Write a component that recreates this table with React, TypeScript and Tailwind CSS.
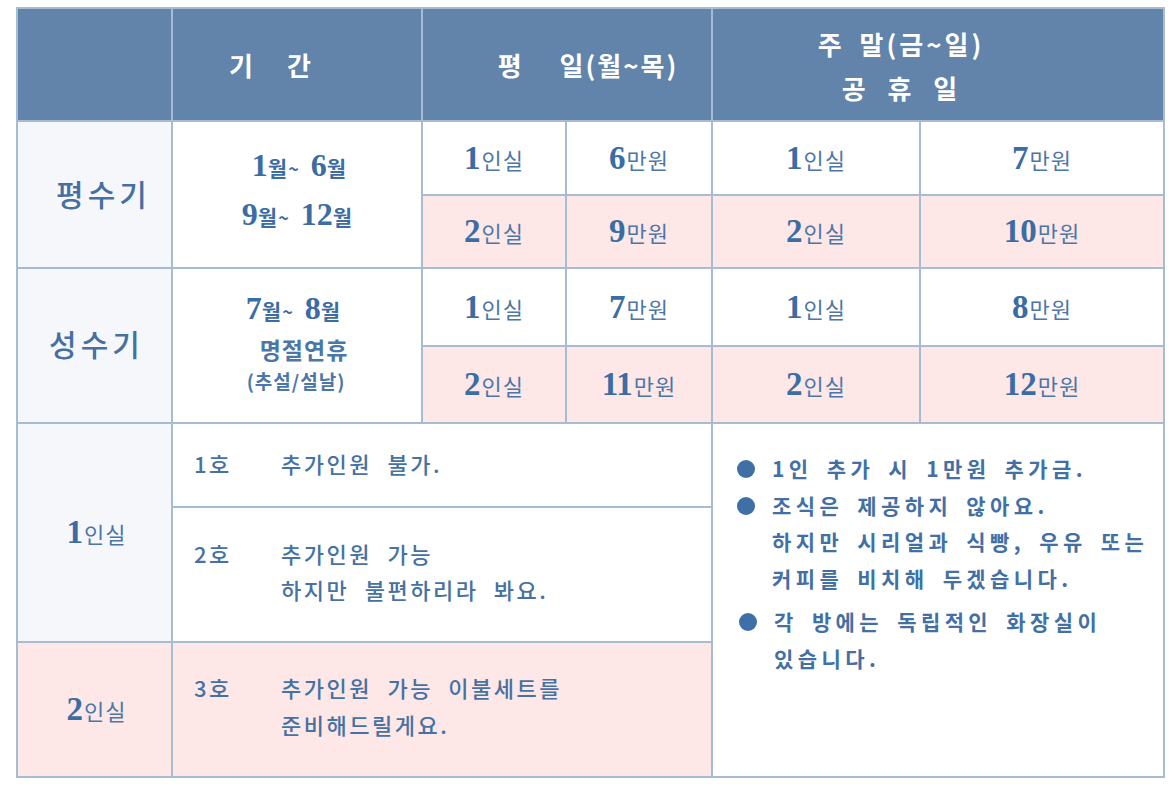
const KR = "font-['Noto_Sans_CJK_KR','Noto_Sans',sans-serif]";
const NUM = "font-['Liberation_Serif','DejaVu_Serif',serif] font-bold";
const cell = 'border-2 border-[#a6bcd3] text-center align-middle';

function Price({ n, unit }: { n: string; unit: string }) {
  return (
    <span className="inline-flex items-baseline">
      <span className={`${NUM} text-[33px] leading-none text-[#3b6ca3]`}>{n}</span>
      <span className={`${KR} text-[22px] leading-none text-[#4b76a8] ml-[1px] tracking-[1px]`}>{unit}</span>
    </span>
  );
}

function Month({ n }: { n: string }) {
  return (
    <>
      <span className={`${NUM} text-[32px]`}>{n}</span>
      <span className={`${KR} text-[21px] font-bold`}>월</span>
    </>
  );
}

function Tilde() {
  return <span className={`${KR} text-[18px] font-bold pl-[1px] pr-[12px]`}>~</span>;
}

function PriceRow({ pink, cells }: { pink: boolean; cells: [string, string][] }) {
  return (
    <>
      {cells.map(([n, unit], i) => (
        <td key={i} className={`${cell} ${pink ? 'bg-[#fde7e7]' : 'bg-white'}`}>
          <Price n={n} unit={unit} />
        </td>
      ))}
    </>
  );
}

const notes = [
  ['1인 추가 시 1만원 추가금.'],
  ['조식은 제공하지 않아요.', '하지만 시리얼과 식빵, 우유 또는', '커피를 비치해 두겠습니다.'],
  ['각 방에는 독립적인 화장실이', '있습니다.'],
];

const roomText = `${KR} text-[22px] font-medium text-[#4671a3] tracking-[2.5px] [word-spacing:8px]`;

export default function App() {
  return (
    <div className="min-h-screen w-full bg-white pl-[16px] pt-[7px]">
      <table className="table-fixed border-collapse w-[1147px]">
        <colgroup>
          <col className="w-[155px]" />
          <col className="w-[250px]" />
          <col className="w-[144px]" />
          <col className="w-[146px]" />
          <col className="w-[208px]" />
          <col className="w-[244px]" />
        </colgroup>
        <tbody>
          {/* header */}
          <tr className="h-[113px] bg-[#6283aa] text-white">
            <td className={cell} />
            <td className={`${cell} ${KR} text-[26px] font-bold pr-[54px]`}>
              <span className="pr-[34px]">기</span>간
            </td>
            <td colSpan={2} className={`${cell} ${KR} text-[26px] font-bold pl-[42px] tracking-[2px]`}>
              <span className="pr-[36px]">평</span>일(월~목)
            </td>
            <td colSpan={2} className={`${cell} ${KR} text-[26px] font-bold leading-[44px] pt-[2px] pr-[74px]`}>
              <div className="tracking-[3px] [word-spacing:6px]">주 말(금~일)</div>
              <div className="tracking-[3px] [word-spacing:10px]">공 휴 일</div>
            </td>
          </tr>

          {/* 평수기 */}
          <tr className="h-[74px]">
            <td rowSpan={2} className={`${cell} bg-[#f6f7fa] ${KR} text-[30px] font-medium text-[#46709f] tracking-[4px] pl-[18px] pb-[2px]`}>
              평수기
            </td>
            <td rowSpan={2} className={`${cell} bg-white text-[#3b6ca3] leading-[44px] pb-[6px]`}>
              <div className="pl-[4px]">
                <Month n="1" />
                <Tilde />
                <Month n="6" />
              </div>
              <div>
                <Month n="9" />
                <Tilde />
                <Month n="12" />
              </div>
            </td>
            <PriceRow pink={false} cells={[['1', '인실'], ['6', '만원'], ['1', '인실'], ['7', '만원']]} />
          </tr>
          <tr className="h-[73px]">
            <PriceRow pink cells={[['2', '인실'], ['9', '만원'], ['2', '인실'], ['10', '만원']]} />
          </tr>

          {/* 성수기 */}
          <tr className="h-[78px]">
            <td rowSpan={2} className={`${cell} bg-[#f6f7fa] ${KR} text-[30px] font-medium text-[#46709f] tracking-[4px] pl-[4px] pb-[4px]`}>
              성수기
            </td>
            <td rowSpan={2} className={`${cell} bg-white text-[#3b6ca3] pb-[6px]`}>
              <div className="leading-[40px] pr-[8px]">
                <Month n="7" />
                <Tilde />
                <Month n="8" />
              </div>
              <div className={`${KR} text-[23px] font-bold text-[#4b76a8] leading-[32px] pl-[14px] tracking-[1px]`}>명절연휴</div>
              <div className={`${KR} text-[19px] font-bold text-[#4b76a8] leading-[32px] pr-[2px] tracking-[1px]`}>(추설/설날)</div>
            </td>
            <PriceRow pink={false} cells={[['1', '인실'], ['7', '만원'], ['1', '인실'], ['8', '만원']]} />
          </tr>
          <tr className="h-[77px]">
            <PriceRow pink cells={[['2', '인실'], ['11', '만원'], ['2', '인실'], ['12', '만원']]} />
          </tr>

          {/* rooms */}
          <tr className="h-[84px]">
            <td rowSpan={2} className={`${cell} bg-[#f6f7fa] pl-[4px]`}>
              <Price n="1" unit="인실" />
            </td>
            <td colSpan={3} className={`${cell} bg-white text-left align-middle ${roomText} pl-[21px] pb-[4px]`}>
              <div className="flex">
                <span className="w-[87px]">1호</span>
                <span>추가인원 불가.</span>
              </div>
            </td>
            <td
              rowSpan={3}
              colSpan={2}
              className={`${cell} bg-white text-left align-top pt-[26px] pl-[24px] ${KR} text-[21px] font-bold text-[#4270a4] tracking-[4.4px] [word-spacing:5px] leading-[36.5px]`}
            >
              {notes.map((lines, i) => (
                <div key={i} className={`flex ${i === 2 ? 'mt-[7px] pl-[2px]' : ''}`}>
                  <span className="w-[35px] shrink-0 flex items-start pt-[10px]">
                    <span className="w-[18px] h-[18px] rounded-full bg-[#3e6fa6]" />
                  </span>
                  <div>
                    {lines.map((l, j) => (
                      <div key={j} className="whitespace-nowrap">{l}</div>
                    ))}
                  </div>
                </div>
              ))}
            </td>
          </tr>
          <tr className="h-[135px]">
            <td colSpan={3} className={`${cell} bg-white text-left align-middle ${roomText} pl-[21px] leading-[36px] pb-[8px]`}>
              <div className="flex">
                <span className="w-[87px] shrink-0">2호</span>
                <div>
                  <div>추가인원 가능</div>
                  <div>하지만 불편하리라 봐요.</div>
                </div>
              </div>
            </td>
          </tr>
          <tr className="h-[135px]">
            <td className={`${cell} bg-[#fde7e7] pl-[4px]`}>
              <Price n="2" unit="인실" />
            </td>
            <td colSpan={3} className={`${cell} bg-[#fde7e7] text-left align-middle ${roomText} pl-[21px] leading-[37px] pb-[8px]`}>
              <div className="flex">
                <span className="w-[87px] shrink-0">3호</span>
                <div>
                  <div>추가인원 가능 이불세트를</div>
                  <div>준비해드릴게요.</div>
                </div>
              </div>
            </td>
          </tr>
        </tbody>
      </table>
    </div>
  );
}
